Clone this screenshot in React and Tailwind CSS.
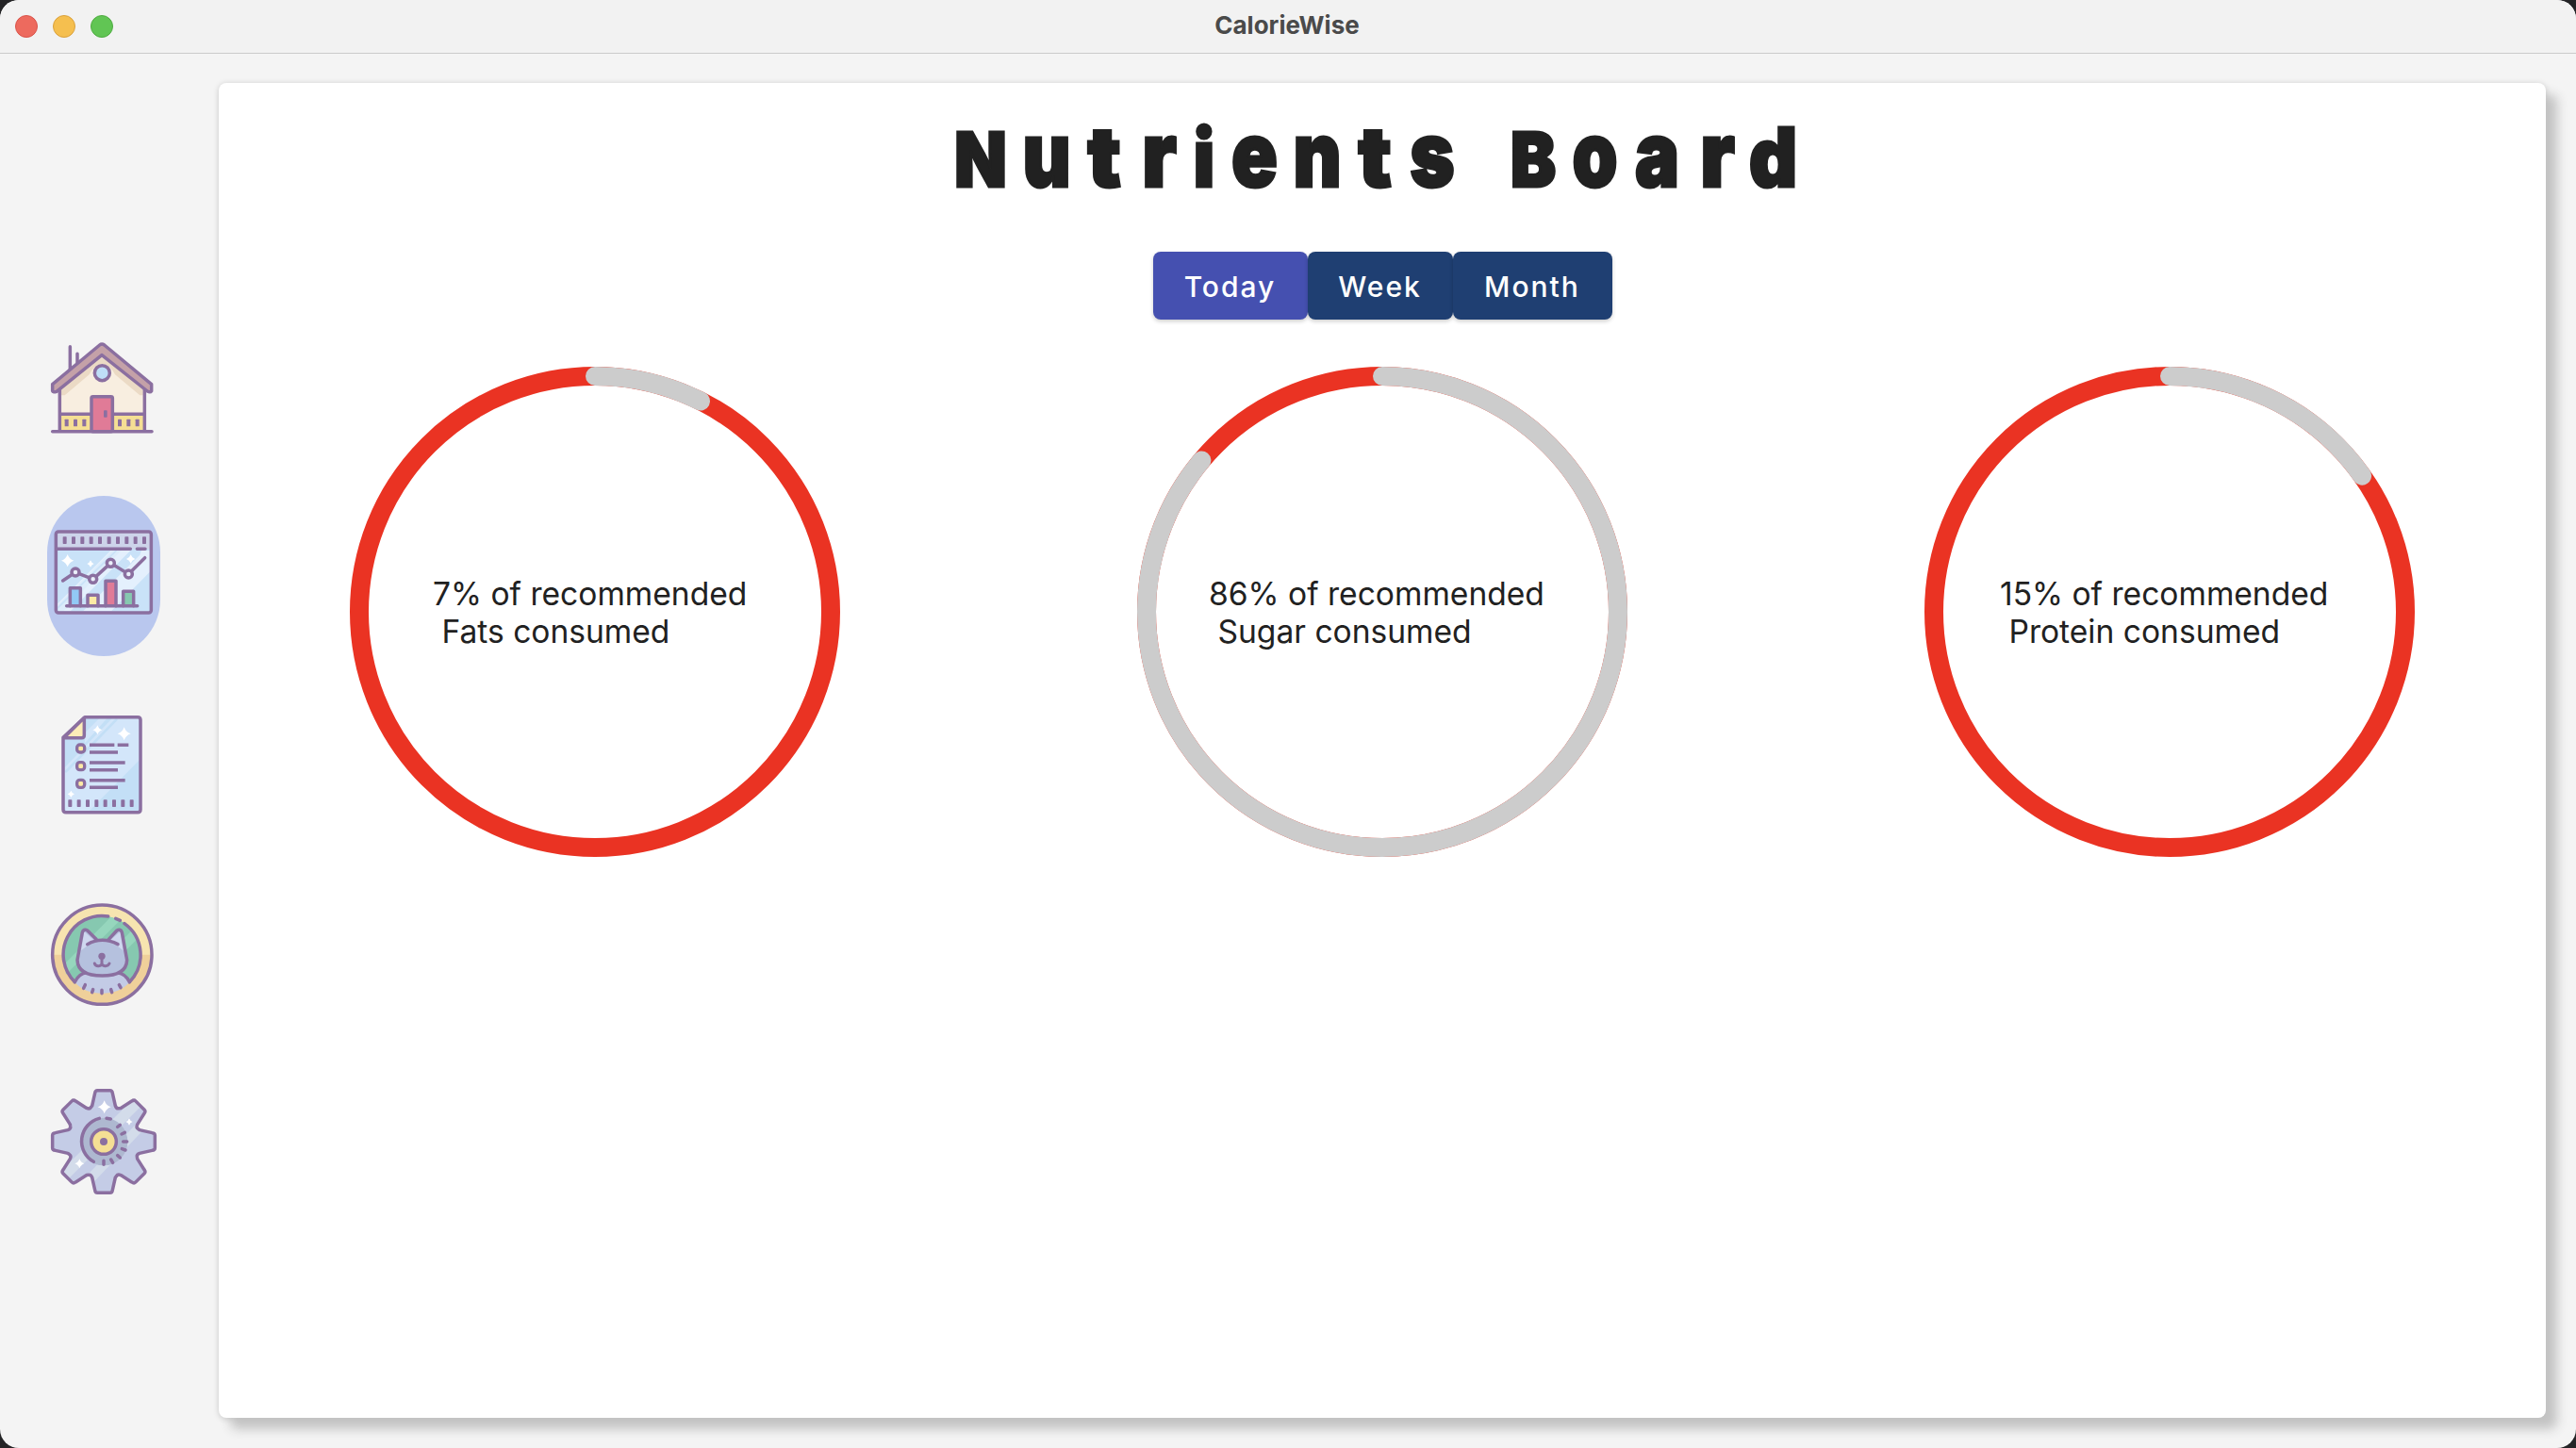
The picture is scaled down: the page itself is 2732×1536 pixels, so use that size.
import React from "react";

const INK = "#8b6fa0";

function Sparkle({ x, y, r }) {
  const q = r * 0.25;
  return (
    <path
      fill="#fff"
      d={`M${x} ${y - r}Q${x + q} ${y - q} ${x + r} ${y}Q${x + q} ${y + q} ${x} ${y + r}Q${x - q} ${y + q} ${x - r} ${y}Q${x - q} ${y - q} ${x} ${y - r}Z`}
    />
  );
}

function HomeIcon() {
  return (
    <svg viewBox="0 0 420 375" className="block h-[125px] w-[140px]" fill="none" stroke={INK} strokeWidth="10.5" strokeLinejoin="round" strokeLinecap="round">
      <path d="M103 53V125M126 76V108" />
      <path d="M70 185L204 75L340 185V322H70Z" fill="#f8eee0" stroke="none" />
      <path d="M75 208V180L204 76L335 180V208H325L246 142Q236 116 205 108Q174 116 164 142L86 208Z" fill="#ebdac5" stroke="none" />
      <path d="M70 268H171V322H70ZM238 268H340V322H238Z" fill="#f5df94" stroke="none" />
      <path d="M72 268H168M242 268H338M70 190V320M340 190V320" />
      <rect x="171" y="212" width="67" height="111" rx="5" fill="#e07b97" />
      <path d="M47 323H363" />
      <g fill={INK} stroke="none">
        {[92, 120, 148, 261, 289, 317].map((x) => (
          <rect key={x} x={x - 6} y="284" width="12" height="23" rx="2" />
        ))}
        <rect x="210" y="256" width="11" height="22" rx="2" />
      </g>
      <path d="M47 173L197 48Q204 42 212 48L362 173V194Q358 200 349 195L204 80L60 196Q49 200 47 194Z" fill="#c4a1a8" />
      <circle cx="205" cy="137" r="24" fill="#bfdef7" />
    </svg>
  );
}

function ChartIcon() {
  return (
    <svg viewBox="0 0 330 290" className="block h-[96.7px] w-[110px]" fill="none" stroke={INK} strokeWidth="10.5" strokeLinejoin="round" strokeLinecap="round">
      <g transform="translate(-45 -130)">
        <rect x="58" y="148" width="303" height="258" rx="8" fill="#c9e2f8" stroke="none" />
        <path d="M232 208H295L105 400H66L62 378ZM330 208H358V275L235 400H145L325 222Z" fill="#e4f0fd" stroke="none" />
        <path d="M237 208L66 380V400H82L265 208Z" fill="#dcecfb" stroke="none" />
        <path d="M250 208L62 392" stroke="#c9e2f8" strokeWidth="5" />
        <rect x="58" y="148" width="303" height="55" fill="#cdd4ea" stroke="none" />
        <rect x="58" y="148" width="303" height="258" rx="8" />
        <path d="M60 203H295M316 203H342" />
        <g fill={INK} stroke="none">
          {[86, 114, 142, 170, 198, 227, 255, 283, 311, 339].map((x) => (
            <rect key={x} x={x - 6} y="164" width="12" height="23" rx="2" />
          ))}
        </g>
        <g stroke="none">
          <Sparkle x={95} y={240} r={20} />
          <Sparkle x={168} y={250} r={11} />
          <Sparkle x={296} y={235} r={14} />
        </g>
        <path d="M80 304L120 277L176 299L232 248L289 283L341 231" />
        <g fill="#eaeffa">
          <circle cx="120" cy="277" r="12" />
          <circle cx="176" cy="299" r="12" />
          <circle cx="232" cy="248" r="12" />
          <circle cx="289" cy="283" r="12" />
        </g>
        <path d="M103 384V327H136V384" fill="#92c9f5" />
        <path d="M159 384V350H192V384" fill="#fdeaa5" />
        <path d="M216 384V305H249V384" fill="#e07b97" />
        <path d="M272 384V338H305V384" fill="#86c8b0" />
        <path d="M92 384H317" />
      </g>
    </svg>
  );
}

function ListIcon() {
  return (
    <svg viewBox="0 0 420 420" className="block h-[140px] w-[140px]" fill="none" stroke={INK} strokeWidth="10.5" strokeLinejoin="round" strokeLinecap="round">
      <path d="M150 62H318Q327 62 327 71V356Q327 365 318 365H90Q81 365 81 356V127Z" fill="#c3dff6" stroke="none" />
      <path d="M262 67H322V200L165 360H90L86 345V222L236 67H250ZM150 145L220 67H195L150 112Z" fill="#d3e6fa" stroke="none" />
      <path d="M250 70L90 235" stroke="#c3dff6" strokeWidth="8" />
      <path d="M150 62H318Q327 62 327 71V356Q327 365 318 365H90Q81 365 81 356V127Z" />
      <path d="M148 64V120Q148 128 140 128H83Z" fill="#fcecb8" />
      <g fill="#fdeaa5" strokeWidth="10">
        {[162, 218, 274].map((y) => (
          <rect key={y} x="125" y={y - 12} width="24" height="24" rx="9" />
        ))}
      </g>
      <path strokeLinecap="butt" d="M165 151H244M254 151H289M165 174H255M165 207H278M165 230H255M165 263H278M165 286H255" />
      <g fill={INK} stroke="none">
        {[103, 131, 159, 187, 215, 243, 271, 299].map((x) => (
          <rect key={x} x={x - 6} y="325" width="12" height="23" rx="2" />
        ))}
      </g>
      <g stroke="none">
        <Sparkle x={190} y={103} r={15} />
        <Sparkle x={275} y={115} r={21} />
        <Sparkle x={106} y={307} r={11} />
      </g>
    </svg>
  );
}

function CatIcon() {
  return (
    <svg viewBox="0 0 420 405" className="block h-[135px] w-[140px]" fill="none" stroke={INK} strokeWidth="10.5" strokeLinejoin="round" strokeLinecap="round">
      <circle cx="205" cy="203" r="158" fill="#f7e4b0" stroke="none" />
      <path d="M47 203A158 158 0 0 0 363 203Z" fill="#efd09a" stroke="none" />
      <circle cx="205" cy="203" r="158" />
      <path d="M118 290A123 123 0 1 1 292 290Z" fill="#86c8b0" stroke="none" />
      <path d="M232 84L262 94L90 266L86 232ZM300 125L318 152L280 190L276 150Z" fill="#96d6bd" stroke="none" />
      <path d="M118 290A123 123 0 0 1 224 81M248 88L262 94M276 104A123 123 0 0 1 292 290" />
      <path d="M118 290Q135 258 160 258H250Q280 262 292 290Q262 326 205 326Q148 326 118 290Z" fill="#c3cbe6" stroke="none" />
      <path d="M118 290Q132 262 156 260M254 260Q280 264 292 290" />
      <path d="M126 220L142 132Q146 120 158 126L186 158Q205 154 226 158L252 126Q264 120 268 132L284 220Q284 270 205 270Q126 270 126 220Z" fill="#b5c1de" stroke="none" />
      <path d="M138 190L148 130L180 158ZM272 190L262 130L230 158Z" fill="#cfd7ef" stroke="none" />
      <path d="M186 154L158 126Q146 120 142 132L126 220Q128 270 205 270Q282 270 284 220L268 132Q264 120 252 126L226 154" />
      <path d="M158 170Q205 144 255 170" />
      <circle cx="204" cy="208" r="11" fill={INK} stroke="none" />
      <path d="M204 212V234M181 231Q184 240 194 239Q203 238 204 232Q205 238 214 239Q224 240 228 231" strokeWidth="9" />
      <path d="M151 299L146 310M176 314L173 323M204 316V326M233 314L236 323M259 299L264 308" />
    </svg>
  );
}

const gearPath = (() => {
  const tooth = [[-37, -114], [-28, -154], [-20, -163], [20, -163], [28, -154], [37, -114]];
  const at = ([x, y], k) => {
    const a = (k * Math.PI) / 4;
    return `${(x * Math.cos(a) - y * Math.sin(a)).toFixed(1)} ${(x * Math.sin(a) + y * Math.cos(a)).toFixed(1)}`;
  };
  let d = "";
  for (let k = 0; k < 8; k++) {
    d += `${k ? "L" : "M"}${at(tooth[0], k)}L${at(tooth[1], k)}Q${at([-27, -163], k)} ${at(tooth[2], k)}L${at(tooth[3], k)}Q${at([27, -163], k)} ${at(tooth[4], k)}L${at(tooth[5], k)}Q${at([41, -104], k)} ${at([48, -106], k)}`;
  }
  return d + "Z";
})();

function GearIcon() {
  return (
    <svg viewBox="0 0 420 420" className="block h-[140px] w-[140px]" fill="none" stroke={INK} strokeWidth="10.5" strokeLinejoin="round" strokeLinecap="round">
      <defs>
        <clipPath id="gear">
          <path d={gearPath} transform="translate(210 213)" />
        </clipPath>
      </defs>
      <path d={gearPath} transform="translate(210 213)" fill="#c4cce6" stroke="none" />
      <g clipPath="url(#gear)" stroke="#d3dcea">
        <path d="M85 320L330 75" strokeWidth="34" />
        <path d="M140 360L350 140" strokeWidth="30" />
      </g>
      <path d={gearPath} transform="translate(210 213)" />
      <circle cx="210" cy="213" r="76" fill="#aeb8d0" stroke="none" />
      <path d="M196 139A75 75 0 0 0 178 277M219 139L232 141" />
      <path d="M254 166L262 160M267 189L277 184M272 213H284M268 236L279 240M254 257L262 264M233 270L239 280M210 274V286" />
      <circle cx="210" cy="213" r="40" fill="#f5df94" />
      <circle cx="210" cy="213" r="12" fill={INK} stroke="none" />
      <g stroke="none">
        <Sparkle x={212} y={103} r={21} />
        <Sparkle x={291} y={150} r={11} />
        <Sparkle x={133} y={283} r={15} />
      </g>
    </svg>
  );
}

const title = [
  ["N", "w-[54px] mr-[20px] text-[80px] scale-x-90"],
  ["u", "w-[46px] mr-[17px] text-[96px] scale-x-[.82]"],
  ["t", "w-[42px] mr-[18px] text-[88px]"],
  ["r", "w-[39px] mr-[18px] text-[96px] scale-x-[.88]"],
  ["i", "w-[20px] mr-[19px] text-[84px] scale-x-90"],
  ["e", "w-[49px] mr-[19px] text-[96px] scale-x-[.84]"],
  ["n", "w-[46px] mr-[17px] text-[96px] scale-x-[.82]"],
  ["t", "w-[42px] mr-[16px] text-[88px]"],
  ["s", "w-[48px] text-[96px] scale-x-[.84]"],
  [" ", "w-[58px] text-[80px]"],
  ["B", "w-[50px] mr-[17px] text-[80px] scale-x-90"],
  ["o", "w-[47px] mr-[19px] text-[96px] scale-x-[.8]"],
  ["a", "w-[47px] mr-[21px] text-[96px] scale-x-[.82]"],
  ["r", "w-[39px] mr-[15px] text-[96px] scale-x-[.88]"],
  ["d", "w-[49px] text-[86px] scale-x-[.92]"],
];

function Ring({ percent, sweep, nutrient, pad }) {
  return (
    <div className="grid h-[520px] w-[520px]">
      <svg viewBox="0 0 520 520" className="col-start-1 row-start-1 h-[520px] w-[520px]" fill="none" strokeWidth="20">
        <circle cx="260" cy="260" r="250" stroke="#ea3323" />
        <circle cx="260" cy="260" r="250" stroke="#cccccc" strokeLinecap="round" pathLength="100" strokeDasharray={`${sweep} 200`} transform="rotate(-90 260 260)" />
      </svg>
      <p className={`col-start-1 row-start-1 self-center whitespace-pre pt-[2px] text-[33.6px] leading-[40px] text-[#212121] ${pad}`}>
        {`${percent}% of recommended\n ${nutrient} consumed`}
      </p>
    </div>
  );
}

export default function App() {
  return (
    <div className="h-[1536px] w-[2732px] bg-[#242426] font-['Inter',sans-serif]">
      <div className="flex h-full w-full flex-col overflow-hidden rounded-[20px] bg-[#f4f4f4]">
        <header className="grid h-[57px] shrink-0 grid-cols-3 items-center border-b border-[#cbcbcb] bg-[#f2f2f2] px-4">
          <div className="flex gap-4">
            <span className="h-6 w-6 rounded-full border border-[#d9534a] bg-[#ed6a5e]" />
            <span className="h-6 w-6 rounded-full border border-[#d9a03c] bg-[#f5bf4f]" />
            <span className="h-6 w-6 rounded-full border border-[#4fab41] bg-[#61c554]" />
          </div>
          <h2 className="pb-[2px] pr-[2px] text-center text-[26px] font-bold leading-none text-[#4a4a4a]">CalorieWise</h2>
        </header>
        <div className="flex flex-1">
          <nav className="flex w-[232px] shrink-0 flex-col pl-10 pt-[293px]">
            <HomeIcon />
            <div className="mb-[44px] ml-[10px] mt-[51px] flex h-[170px] w-[120px] justify-center rounded-full bg-[#b9c7ee] pt-[32.3px]">
              <ChartIcon />
            </div>
            <ListIcon />
            <div className="mt-[65px]">
              <CatIcon />
            </div>
            <div className="mt-[60px]">
              <GearIcon />
            </div>
          </nav>
          <main className="mb-8 mr-8 mt-[31px] flex flex-1 flex-col items-center rounded-lg bg-white shadow-[12px_12px_12px_#c3c3c3,0_1px_6px_#0000002e]">
            <h1 className="mt-[25px] h-[100px] whitespace-pre pr-[14px] text-[80px] font-black leading-[100px] text-[#212121] [-webkit-text-stroke:3px_#212121]">
              {title.map(([ch, cls], i) => (
                <span key={i} className={`inline-flex justify-center whitespace-pre ${cls}`}>{ch}</span>
              ))}
            </h1>
            <div className="mt-[54px] flex text-[30px] font-medium tracking-[2px] text-white">
              <button className="h-[72px] w-[164px] rounded-lg bg-[#4550b0] pt-[2px] shadow-[0_2px_4px_#0003]">Today</button>
              <button className="h-[72px] w-[154px] rounded-lg bg-[#1f3f72] pt-[2px] shadow-[0_2px_4px_#0003]">Week</button>
              <button className="h-[72px] w-[169px] rounded-lg bg-[#1f3f72] pt-[2px] shadow-[0_2px_4px_#0003]">Month</button>
            </div>
            <section className="mt-[50px] flex gap-[315px]">
              <Ring percent={7} sweep={7.4} nutrient="Fats" pad="pl-[88px]" />
              <Ring percent={86} sweep={86.1} nutrient="Sugar" pad="pl-[76px]" />
              <Ring percent={15} sweep={15.2} nutrient="Protein" pad="pl-[80px]" />
            </section>
          </main>
        </div>
      </div>
    </div>
  );
}
